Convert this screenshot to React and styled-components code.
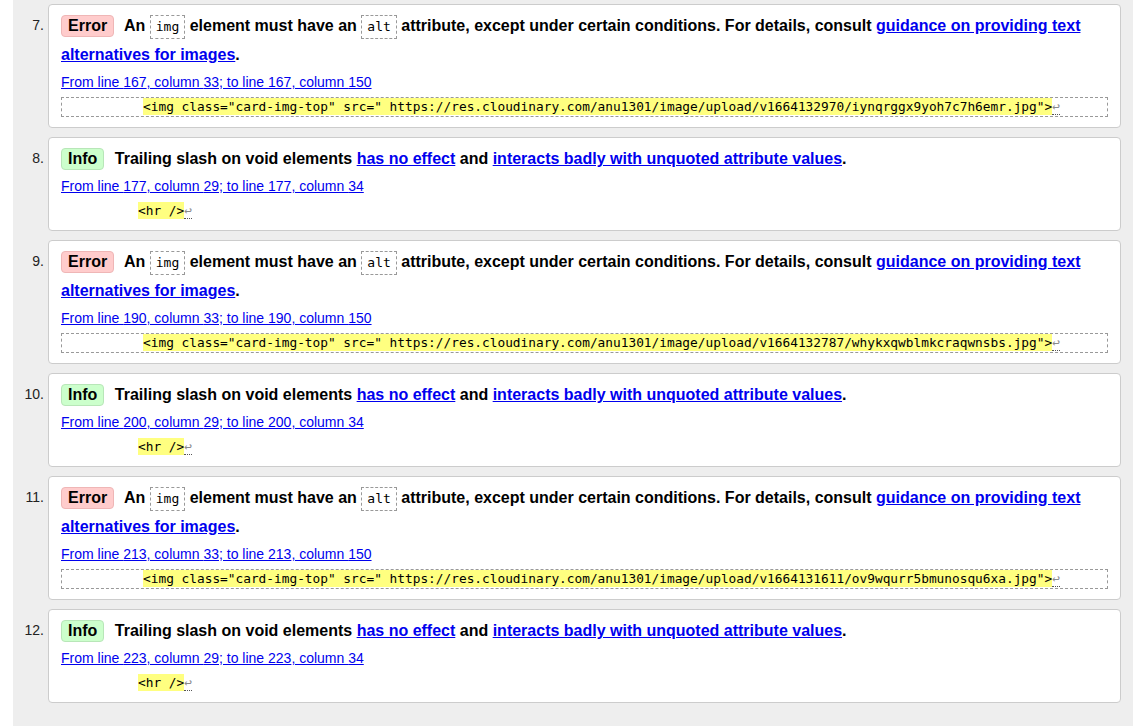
import styled, { createGlobalStyle } from 'styled-components';

const GlobalStyle = createGlobalStyle`
  html, body {
    margin: 0;
    padding: 0;
    background: #fff;
    font-family: "Liberation Sans", Arial, sans-serif;
    color: #000;
  }
`;

const Page = styled.div`
  margin-left: 13px;
  background: #eeeeee;
  padding: 4px 12px 26px 0;
  min-height: 696px;
`;

const List = styled.ol`
  list-style: none;
  margin: 0;
  padding: 0;
  display: flex;
  flex-direction: column;
  gap: 9px;
`;

const Item = styled.li`
  display: grid;
  grid-template-columns: 35px 1fr;
`;

const Num = styled.span`
  padding: 7px 4px 0 0;
  text-align: right;
  font-size: 14px;
  line-height: 29px;
  color: #222;
`;

const Card = styled.div`
  background: #fff;
  border: 1px solid #cccccc;
  border-radius: 4px;
  padding: 6px 12px 10px 12px;
`;

const Message = styled.p`
  margin: 0;
  font-size: 16px;
  font-weight: bold;
  line-height: 29px;
`;

const Badge = styled.strong`
  display: inline-block;
  line-height: 18px;
  padding: 1px 6px;
  margin-right: 6px;
  border-radius: 4px;
  border: 1px solid ${p => (p.$kind === 'error' ? '#efb6b6' : '#b8e6b8')};
  background: ${p => (p.$kind === 'error' ? '#ffcccc' : '#ccffcc')};
`;

const Code = styled.code`
  display: inline-block;
  font-family: "DejaVu Sans Mono", "Liberation Mono", monospace;
  font-weight: normal;
  font-size: 13px;
  line-height: 18px;
  padding: 2px 5px;
  border: 1px dashed #999;
`;

const Link = styled.a`
  color: #0000ee;
  text-decoration: underline;
`;

const Location = styled.p`
  margin: 4px 0 0 0;
  font-size: 14px;
  line-height: 18px;
  a {
    color: #0000ee;
  }
`;

const Extract = styled.p`
  margin: 6px 0 0 0;
  font-family: "DejaVu Sans Mono", "Liberation Mono", monospace;
  font-size: 12.8px;
  line-height: ${p => (p.$boxed ? '16px' : '19px')};
  padding: ${p => (p.$boxed ? '1px 4px' : '0')};
  border: ${p => (p.$boxed ? '1px dashed #999' : 'none')};
  white-space: pre;
  overflow: hidden;
`;

const Mark = styled.b`
  font-weight: normal;
  background: #ffff80;
  padding: 1px 0;
`;

const Lf = styled.span`
  color: #8a8a8a;
  border-bottom: 1px dotted #555;
`;

const imgMessage = (
  <>
    An <Code>img</Code> element must have an <Code>alt</Code> attribute, except under certain conditions. For details, consult{' '}
    <Link href="#">guidance on providing text alternatives for images</Link>.
  </>
);

const slashMessage = (
  <>
    Trailing slash on void elements <Link href="#">has no effect</Link> and{' '}
    <Link href="#">interacts badly with unquoted attribute values</Link>.
  </>
);

const imgExtract = (id) =>
  `<img class="card-img-top" src=" https://res.cloudinary.com/anu1301/image/upload/${id}.jpg">`;

const messages = [
  { n: 7, kind: 'error', line: 167, from: 33, to: 150, code: imgExtract('v1664132970/iynqrggx9yoh7c7h6emr') },
  { n: 8, kind: 'info', line: 177, from: 29, to: 34, code: '<hr />' },
  { n: 9, kind: 'error', line: 190, from: 33, to: 150, code: imgExtract('v1664132787/whykxqwblmkcraqwnsbs') },
  { n: 10, kind: 'info', line: 200, from: 29, to: 34, code: '<hr />' },
  { n: 11, kind: 'error', line: 213, from: 33, to: 150, code: imgExtract('v1664131611/ov9wqurr5bmunosqu6xa') },
  { n: 12, kind: 'info', line: 223, from: 29, to: 34, code: '<hr />' },
];

const App = () => {
  return (
    <>
      <GlobalStyle />
      <Page>
        <List>
          {messages.map((m) => (
            <Item key={m.n}>
              <Num>{m.n}.</Num>
              <Card>
                <Message>
                  <Badge $kind={m.kind}>{m.kind === 'error' ? 'Error' : 'Info'}</Badge>{' '}
                  {m.kind === 'error' ? imgMessage : slashMessage}
                </Message>
                <Location>
                  <a href="#">
                    From line {m.line}, column {m.from}; to line {m.line}, column {m.to}
                  </a>
                </Location>
                <Extract $boxed={m.kind === 'error'}>
                  {'          '}
                  <Mark>{m.code}</Mark>
                  <Lf>↩</Lf>
                </Extract>
              </Card>
            </Item>
          ))}
        </List>
      </Page>
    </>
  );
};

export default App;
